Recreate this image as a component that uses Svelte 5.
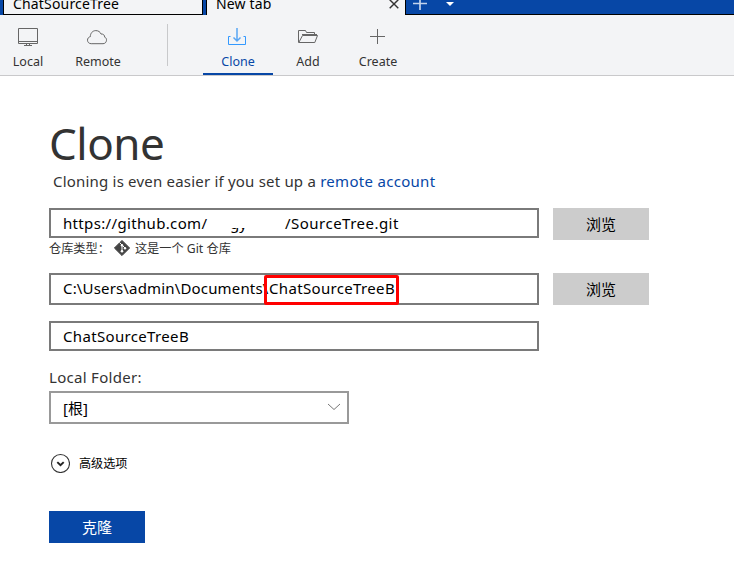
<script>
  let url = $state('https://github.com/');
  let name = $state('ChatSourceTreeB');
</script>

<div class="window">
  <header class="tabs">
    <div class="tab first"><span>ChatSourceTree</span></div>
    <div class="tab active">
      <span>New tab</span>
      <svg class="close" width="10" height="10" viewBox="0 0 10 10"><path d="M.7 .7 9.3 9.3M9.3 .7 .7 9.3" stroke="#333" stroke-width="1.4" /></svg>
    </div>
    <div class="rest">
      <svg width="60" height="14" viewBox="0 0 60 14"><path d="M7 3.5H21M14 -4V10" stroke="#c3d3ec" stroke-width="1.7" /><path d="M40 2H48L44 6Z" fill="#fff" /></svg>
    </div>
  </header>

  <nav>
    <button class="item">
      <svg width="24" height="24" viewBox="0 0 24 24"><path d="M2.5 3.5H21.5V18.5H2.5ZM2.5 16.5H21.5M10.5 19V20.5M13.5 19V20.5M8 20.5H16" /></svg>
      <span>Local</span>
    </button>
    <button class="item remote">
      <svg width="24" height="24" viewBox="0 0 24 24"><path d="M5.2 18.7C3 18.7 1.5 17.1 1.5 15.2C1.5 13.3 2.7 12 4.4 11.6C4.2 8.4 6.6 5.6 9.8 5.6C12.3 5.6 14.2 6.9 15 9C17.3 8.8 18.8 10.3 18.7 12.2C20 12.6 20.6 13.9 20.5 15.3C20.3 17.4 18.9 18.7 17 18.7Z" /></svg>
      <span>Remote</span>
    </button>
    <i class="divider"></i>
    <button class="item selected">
      <svg width="24" height="24" viewBox="0 0 24 24"><path d="M4.5 11.5H2.5V19.5H19.5V11.5H17.5" stroke="#3399ff" /><path d="M11 3V15.5M7.5 12.5 11 16 14.5 12.5" stroke="#58a5f4" stroke-width="1.5" /></svg>
      <span>Clone</span>
    </button>
    <button class="item">
      <svg width="24" height="24" viewBox="0 0 24 24"><path d="M2.5 17.5V5.5H9.5L10.5 7.5H18.5V9.5M2.8 17.5 6.5 10.5H21.5L18.8 17.5ZM6 9.5H21" /></svg>
      <span>Add</span>
    </button>
    <button class="item">
      <svg width="24" height="24" viewBox="0 0 24 24"><path d="M4 11.5H19M11.5 4V19" /></svg>
      <span>Create</span>
    </button>
  </nav>

  <main>
    <h1><span>Clone</span></h1>
    <p class="lead"><span>Cloning is even easier if you set up a</span> <a href="#remote"><b>remote account</b></a></p>

    <div class="row">
      <div class="field source"><span class="host">{url}</span><span class="masked"><i>gy</i></span><span class="repo">/SourceTree.git</span></div>
      <button class="browse">浏览</button>
    </div>
    <div class="kind">
      <span>仓库类型：</span>
      <svg width="16" height="16" viewBox="0 0 16 16"><path d="M8 .4 15.6 8 8 15.6 .4 8Z" fill="#444" stroke="#444" stroke-linejoin="round" /><path d="M5.5 2.5 8 5V11.5M8 5 11 8" stroke="#fff" fill="none" /><circle cx="8" cy="5.2" r="1.2" fill="#fff" /><circle cx="8" cy="11.3" r="1.3" fill="#fff" /><circle cx="11" cy="8.2" r="1.2" fill="#fff" /></svg>
      <span>这是一个 Git 仓库</span>
    </div>
    <div class="row second">
      <div class="field path"><span class="dir">C:\Users\admin\Documents\</span><span class="leaf">ChatSourceTreeB</span><div class="mark"></div></div>
      <button class="browse">浏览</button>
    </div>
    <div class="field bookmark"><span class="leaf">{name}</span></div>
    <div class="label"><span>Local Folder:</span></div>
    <div class="select">
      <span>[根]</span>
      <svg width="14" height="8" viewBox="0 0 14 8"><path d="M1 1 7 6.5 13 1" stroke="#777" fill="none" /></svg>
    </div>
    <div class="advanced">
      <svg width="20" height="20" viewBox="0 0 20 20"><circle cx="10.5" cy="10.5" r="9" fill="none" stroke="#333" stroke-width="1.1" /><path d="M7.3 9.1 10.5 12.2 13.7 9.1" fill="none" stroke="#222" stroke-width="2" /></svg>
      <span>高级选项</span>
    </div>
    <button class="submit">克隆</button>
  </main>
</div>

<style>
  :global(body) { background: #fff; overflow: hidden; }
  * { box-sizing: border-box; }
  .window { width: 734px; height: 562px; overflow: hidden; font-family: "Noto Sans", "Noto Sans CJK SC", sans-serif; font-size: 15px; color: #000; white-space: nowrap; }
  button { border: 0; padding: 0; margin: 0; font: inherit; color: inherit; background: none; }
  svg { display: block; flex: none; }
  .tabs { display: flex; height: 15px; background: #0747a6; padding-left: 3px; overflow: hidden; }
  .tab { background: #f3f4f6; height: 15px; line-height: 20px; font-size: 14px; letter-spacing: .17px; }
  .tab span { display: block; margin-top: -6px; }
  .first { width: 200px; border: 1px solid #000; border-top: 0; padding-left: 9px; box-shadow: -3px 0 0 #0747a6; }
  .active { width: 199px; margin-left: 3px; border-left: 1px solid #000; padding: 0 6px 0 9px; display: flex; justify-content: space-between; }
  .close { margin-top: -1px; }
  .rest { flex: 1; border: 1px solid #000; border-width: 0 0 1px 1px; }
  nav { display: flex; height: 61px; background: #f3f4f6; border-bottom: 1px solid #c9c9cb; padding-top: 10px; }
  .item { width: 70px; height: 50px; display: flex; flex-direction: column; align-items: center; font-size: 12.5px; line-height: 18px; color: #333; flex: none; }
  .item:first-child { margin-left: -7px; }
  .item svg { fill: none; stroke: #666; stroke-width: 1; }
  .item span { margin-top: 4px; }
  .remote span { letter-spacing: -.05px; }
  .selected { color: #0747a6; border-bottom: 2px solid #0747a6; }
  .divider { width: 1px; height: 42px; margin: -1px 35px 0 34px; background: #c8c9cb; }
  main { padding-left: 49px; }
  h1 { margin: 39px 0 0; height: 55px; line-height: 56px; font-weight: 400; font-size: 44px; letter-spacing: -.5px; color: #333; }
  .lead { margin: 0; padding-left: 4px; height: 22px; line-height: 22px; color: #333; letter-spacing: .2px; }
  .lead b { font-weight: 400; letter-spacing: .3px; }
  a { color: #0747a6; text-decoration: none; }
  .row { display: flex; gap: 14px; margin-top: 16px; }
  .field { width: 490px; height: 30px; border: 2px solid #7a7a7a; padding-left: 12px; line-height: 26px; display: flex; position: relative; }
  .host { width: 144px; letter-spacing: .34px; }
  .repo { letter-spacing: .48px; }
  .dir { width: 206px; letter-spacing: .16px; }
  .leaf { letter-spacing: .34px; }
  .browse { width: 96px; height: 32px; background: #ccc; line-height: 32px; }
  .masked { width: 78px; height: 9px; overflow: hidden; margin-top: 18px; }
  .masked i { display: block; font-style: normal; margin: -18px 0 0 23px; }
  .kind { display: flex; align-items: center; height: 18px; margin-top: -1px; font-size: 12.2px; color: #333; line-height: 18px; }
  .kind span { position: relative; top: 1px; }
  .kind svg { margin: 0 5px 0 4px; }
  .second { margin-top: 16px; }
  .path { height: 32px; line-height: 27px; }
  .mark { position: absolute; left: 213px; top: 0; width: 135px; height: 30px; border: 3px solid #f00; border-radius: 2px; }
  .bookmark { margin-top: 16px; }
  .label { margin-top: 15px; height: 22px; line-height: 22px; color: #333; letter-spacing: .3px; }
  .select { margin-top: 3px; width: 300px; height: 33px; border: 2px solid #999; padding: 0 6px 1px 12px; display: flex; align-items: center; justify-content: space-between; }
  .advanced { display: flex; align-items: center; gap: 9px; margin: 29px 0 0 1px; height: 20px; font-size: 12.1px; }
  .submit { display: block; margin-top: 38px; width: 96px; height: 32px; line-height: 32px; background: #0747a6; color: #fff; }
</style>
